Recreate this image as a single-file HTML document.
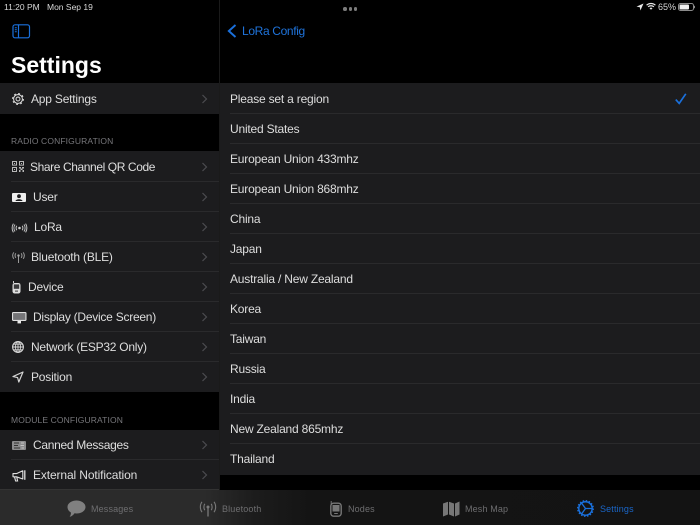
<!DOCTYPE html>
<html><head><meta charset="utf-8">
<style>
html,body{margin:0;padding:0;background:#000}
#p{position:relative;width:700px;height:525px;overflow:hidden;background:#000;font-family:"Liberation Sans",sans-serif;color:#e6e6e6}
#p *{box-sizing:border-box}
.a{position:absolute}
.t{position:absolute;white-space:nowrap;font-size:12px;line-height:16px;color:#dedede;letter-spacing:-.2px}
.row{position:absolute;background:#1c1c1e}
.sep{position:absolute;height:1px;background:#2a2a2c}
.h{position:absolute;white-space:nowrap;font-size:8.5px;line-height:12px;color:#77777b;letter-spacing:.13px}
svg{position:absolute;overflow:visible}
.tb{position:absolute;white-space:nowrap;font-size:9px;line-height:12px;color:#6e6e70;letter-spacing:.15px}
</style></head><body><div id="p">

<!-- sidebar groups -->
<div class="row" style="left:0;top:83px;width:219px;height:31px"></div>
<div class="row" style="left:0;top:151px;width:219px;height:241px"></div>
<div class="row" style="left:0;top:430px;width:219px;height:60px"></div>
<div class="a" style="left:219px;top:0;width:1px;height:490px;background:#1a1a1a"></div>

<!-- right list -->
<div class="row" style="left:220px;top:83px;width:480px;height:392px"></div>

<!-- status -->
<div class="t" style="left:4px;top:1px;font-size:8.5px;line-height:12px;color:#d8d8d8;letter-spacing:0">11:20 PM</div>
<div class="t" style="left:47px;top:1px;font-size:8.5px;line-height:12px;color:#d8d8d8;letter-spacing:0">Mon Sep 19</div>
<svg style="left:636px;top:3px" width="8" height="8" viewBox="0 0 8 8"><path d="M7.5 .5L.5 3.6 3.8 4.2 4.4 7.5Z" fill="#e8e8e8"/></svg>
<svg style="left:646px;top:2px" width="10" height="9" viewBox="0 0 10 9"><path d="M.6 3.2C3 .9 7 .9 9.4 3.2M2.1 4.8C3.7 3.4 6.3 3.4 7.9 4.8" fill="none" stroke="#e8e8e8" stroke-width="1.2"/><path d="M3.5 6.2C4.4 5.4 5.6 5.4 6.5 6.2L5 7.8Z" fill="#e8e8e8"/></svg>
<div class="t" style="left:658px;top:1px;font-size:9px;line-height:12px;color:#d8d8d8;letter-spacing:0">65%</div>
<svg style="left:678px;top:3px" width="18" height="8" viewBox="0 0 18 8"><rect x=".5" y=".5" width="15" height="7" rx="2" fill="none" stroke="#8a8a8a"/><rect x="1.5" y="1.5" width="9.5" height="5" rx="1" fill="#f0f0f0"/><rect x="16" y="2.8" width="1" height="2.4" fill="#8a8a8a"/></svg>
<div class="a" style="left:343px;top:7px;width:3.5px;height:3.5px;border-radius:50%;background:#7c7c7c"></div>
<div class="a" style="left:348.5px;top:7px;width:3.5px;height:3.5px;border-radius:50%;background:#7c7c7c"></div>
<div class="a" style="left:353.5px;top:7px;width:3.5px;height:3.5px;border-radius:50%;background:#7c7c7c"></div>

<!-- sidebar header -->
<svg style="left:12px;top:24px" width="19" height="15" viewBox="0 0 19 15" fill="none" stroke="#1a70dc" stroke-width="1.2"><rect x="1" y=".8" width="16.5" height="13" rx="2"/><path d="M6.5 .8V13.8"/><path d="M2.8 3.8H4.8M2.8 5.8H4.8M2.8 7.8H4.8" stroke-width="1"/></svg>
<div class="t" style="left:11px;top:51px;font-size:23px;line-height:28px;font-weight:700;color:#fff;letter-spacing:0">Settings</div>

<!-- back -->
<svg style="left:227px;top:24px" width="10" height="14" viewBox="0 0 10 14"><path d="M8.5 1L1.8 7 8.5 13" fill="none" stroke="#1a70dc" stroke-width="1.9"/></svg>
<div class="t" style="left:242px;top:23px;color:#1f74dc;letter-spacing:-.35px">LoRa Config</div>

<!-- sidebar rows -->
<div class="t" style="left:31px;top:91px">App Settings</div>
<div class="h" style="left:11px;top:135px">RADIO CONFIGURATION</div>
<div class="t" style="left:30px;top:159px;letter-spacing:-.4px">Share Channel QR Code</div>
<div class="t" style="left:33px;top:189px">User</div>
<div class="t" style="left:34px;top:219px">LoRa</div>
<div class="t" style="left:31px;top:249px">Bluetooth (BLE)</div>
<div class="t" style="left:28px;top:279px">Device</div>
<div class="t" style="left:33px;top:309px;letter-spacing:-.25px">Display (Device Screen)</div>
<div class="t" style="left:31px;top:339px;letter-spacing:-.25px">Network (ESP32 Only)</div>
<div class="t" style="left:31px;top:369px">Position</div>
<div class="h" style="left:11px;top:414px">MODULE CONFIGURATION</div>
<div class="t" style="left:33px;top:437px;letter-spacing:-.3px">Canned Messages</div>
<div class="t" style="left:33px;top:467px;letter-spacing:-.12px">External Notification</div>

<div class="sep" style="left:11px;top:181px;width:208px"></div>
<div class="sep" style="left:11px;top:211px;width:208px"></div>
<div class="sep" style="left:11px;top:241px;width:208px"></div>
<div class="sep" style="left:11px;top:271px;width:208px"></div>
<div class="sep" style="left:11px;top:301px;width:208px"></div>
<div class="sep" style="left:11px;top:331px;width:208px"></div>
<div class="sep" style="left:11px;top:361px;width:208px"></div>
<div class="sep" style="left:11px;top:459px;width:208px"></div>

<!-- chevrons -->
<svg style="left:201px;top:94px" width="7" height="10" viewBox="0 0 7 10"><path id="c" d="M1.5 1L5.5 5 1.5 9" fill="none" stroke="#4c4c50" stroke-width="1.2"/></svg>
<svg style="left:201px;top:162px" width="7" height="10"><use href="#c"/></svg>
<svg style="left:201px;top:192px" width="7" height="10"><use href="#c"/></svg>
<svg style="left:201px;top:222px" width="7" height="10"><use href="#c"/></svg>
<svg style="left:201px;top:252px" width="7" height="10"><use href="#c"/></svg>
<svg style="left:201px;top:282px" width="7" height="10"><use href="#c"/></svg>
<svg style="left:201px;top:312px" width="7" height="10"><use href="#c"/></svg>
<svg style="left:201px;top:342px" width="7" height="10"><use href="#c"/></svg>
<svg style="left:201px;top:372px" width="7" height="10"><use href="#c"/></svg>
<svg style="left:201px;top:440px" width="7" height="10"><use href="#c"/></svg>
<svg style="left:201px;top:470px" width="7" height="10"><use href="#c"/></svg>

<!-- sidebar icons -->
<svg style="left:12px;top:93px" width="12" height="12" viewBox="0 0 13 13" fill="none" stroke="#d8d8d8"><circle cx="6.5" cy="6.5" r="2.1" stroke-width="1.1"/><circle cx="6.5" cy="6.5" r="4.8" stroke-width="1.1"/><circle cx="6.5" cy="6.5" r="5.8" stroke-width="1.3" stroke-dasharray="2 2.55"/></svg>
<svg style="left:12px;top:161px" width="12" height="11" viewBox="0 0 12 11" fill="#b8b8b8"><path fill-rule="evenodd" d="M0 0H5V4.6H0ZM1 1V3.6H4V1ZM7 0H12V4.6H7ZM8 1V3.6H11V1ZM0 6H5V11H0ZM1 7V10H4V7Z"/><rect x="2" y="2" width="1" height="1"/><rect x="9" y="2" width="1" height="1"/><rect x="2" y="8" width="1" height="1"/><path d="M7 6H9V7.5H7ZM10 6H12V7.5H10ZM8.5 7.5H10.5V9H8.5ZM7 9H8.5V11H7ZM10.5 9H12V11H10.5Z"/></svg>
<svg style="left:12px;top:193px" width="14" height="9" viewBox="0 0 14 9"><rect width="14" height="9" rx="1" fill="#eee"/><circle cx="7" cy="3.2" r="1.9" fill="#1c1c1e"/><path d="M3.5 8C3.8 5.6 10.2 5.6 10.5 8Z" fill="#1c1c1e"/></svg>
<svg style="left:12px;top:223px" width="15" height="10" viewBox="0 0 15 10" fill="none" stroke="#c4c4c4" stroke-width="1"><circle cx="7.5" cy="5" r="1.3" fill="#d0d0d0" stroke="none"/><path d="M4.8 2.7C4 4 4 6 4.8 7.3M10.2 2.7C11 4 11 6 10.2 7.3M3 1.5C1.6 3.6 1.6 6.4 3 8.5M12 1.5C13.4 3.6 13.4 6.4 12 8.5M1.4.6C-.3 3.2 -.3 6.8 1.4 9.4M13.6.6C15.3 3.2 15.3 6.8 13.6 9.4"/></svg>
<svg style="left:12px;top:252px" width="13" height="11" viewBox="0 0 13 11" fill="none" stroke="#9a9a9a" stroke-width="1"><circle cx="6.5" cy="3.6" r="1.2" fill="#aaa" stroke="none"/><path d="M6.5 4.5V11M3.8 1.3C2.9 2.7 2.9 4.5 3.8 5.9M9.2 1.3C10.1 2.7 10.1 4.5 9.2 5.9M1.8.4C.4 2.4 .4 4.8 1.8 6.8M11.2.4C12.6 2.4 12.6 4.8 11.2 6.8"/></svg>
<svg style="left:12px;top:281px" width="9" height="13" viewBox="0 0 9 13"><path d="M1.5 0V2" stroke="#ccc" fill="none"/><rect x=".5" y="2" width="8" height="10.5" rx="2.2" fill="#ddd"/><rect x="1.8" y="3.4" width="5.4" height="4.4" fill="#3a3a3c"/><rect x="3" y="9.6" width="3" height="1" fill="#3a3a3c"/></svg>
<svg style="left:12px;top:312px" width="14.5" height="12" viewBox="0 0 14.5 12"><rect width="14.5" height="9" rx="1.2" fill="#dedede"/><rect x="1.1" y="1.1" width="12.3" height="6.8" fill="#747477"/><rect x="5.5" y="9" width="3.5" height="2.4" fill="#e8e8e8"/></svg>
<svg style="left:12px;top:341px" width="12" height="12" viewBox="0 0 12 12" fill="none" stroke="#d6d6d6" stroke-width=".9"><circle cx="6" cy="6" r="5.4" stroke-width="1.1"/><ellipse cx="6" cy="6" rx="2.5" ry="5.4"/><path d="M6 .5V11.5M.5 6H11.5M1.3 3.2H10.7M1.3 8.8H10.7"/></svg>
<svg style="left:12px;top:371px" width="12" height="12" viewBox="0 0 12 12"><path d="M11 1L1 5.6 5.6 6.6 6.8 11Z" fill="none" stroke="#d4d4d4" stroke-width="1.2" stroke-linejoin="round"/></svg>
<svg style="left:12px;top:441px" width="14" height="9" viewBox="0 0 14 9"><rect width="14" height="9" rx="1" fill="#8c8c8e"/><path d="M2 2H7M2 4.5H6M2 7H8" stroke="#333"/><path d="M9 2H12M8.5 4.5H12M9.5 7H12" stroke="#c4c4c4"/></svg>
<svg style="left:12px;top:470px" width="14" height="12" viewBox="0 0 14 12" fill="none" stroke="#e0e0e0" stroke-width="1.1"><path d="M1 3.6H4.5L10.8 .8V9L4.5 6.8H1Z" stroke-linejoin="round"/><path d="M12.8 .3V9.8" stroke-width="1.3"/><path d="M2.5 6.8L3.6 11H5.6L4.8 7"/></svg>

<!-- right rows -->
<div class="t" style="left:230px;top:91px">Please set a region</div>
<div class="t" style="left:230px;top:121px">United States</div>
<div class="t" style="left:230px;top:151px">European Union 433mhz</div>
<div class="t" style="left:230px;top:181px">European Union 868mhz</div>
<div class="t" style="left:230px;top:211px">China</div>
<div class="t" style="left:230px;top:241px">Japan</div>
<div class="t" style="left:230px;top:271px">Australia / New Zealand</div>
<div class="t" style="left:230px;top:301px">Korea</div>
<div class="t" style="left:230px;top:331px">Taiwan</div>
<div class="t" style="left:230px;top:361px">Russia</div>
<div class="t" style="left:230px;top:391px">India</div>
<div class="t" style="left:230px;top:421px">New Zealand 865mhz</div>
<div class="t" style="left:230px;top:451px">Thailand</div>
<div class="sep" style="left:230px;top:113px;width:470px"></div>
<div class="sep" style="left:230px;top:143px;width:470px"></div>
<div class="sep" style="left:230px;top:173px;width:470px"></div>
<div class="sep" style="left:230px;top:203px;width:470px"></div>
<div class="sep" style="left:230px;top:233px;width:470px"></div>
<div class="sep" style="left:230px;top:263px;width:470px"></div>
<div class="sep" style="left:230px;top:293px;width:470px"></div>
<div class="sep" style="left:230px;top:323px;width:470px"></div>
<div class="sep" style="left:230px;top:353px;width:470px"></div>
<div class="sep" style="left:230px;top:383px;width:470px"></div>
<div class="sep" style="left:230px;top:413px;width:470px"></div>
<div class="sep" style="left:230px;top:443px;width:470px"></div>
<svg style="left:675px;top:93px" width="12" height="12" viewBox="0 0 12 12"><path d="M.8 6.6L4.2 10.4 10.8 .8" fill="none" stroke="#1a70dc" stroke-width="1.7"/></svg>

<!-- tab bar -->
<div class="a" style="left:0;top:490px;width:700px;height:35px;background:linear-gradient(90deg,#2b2b2b 0,#2b2b2b 205px,#1c1c1c 255px,#141414 310px,#131313 700px)"></div>
<div class="a" style="left:0;top:489px;width:219px;height:1px;background:#333"></div>
<svg style="left:67px;top:500px" width="19" height="18" viewBox="0 0 19 18"><path d="M9.5 .5C14.5 .5 18.5 3.3 18.5 7S14.5 13.5 9.5 13.5C8.8 13.5 8.1 13.4 7.5 13.3 6.5 15 4.5 16.5 2.6 16.8 3.6 15.5 4 14 3.9 12.5 1.8 11.3.5 9.3.5 7 .5 3.3 4.5 .5 9.5 .5Z" fill="#808080"/></svg>
<div class="tb" style="left:91px;top:503px">Messages</div>
<svg style="left:199px;top:501px" width="18" height="16" viewBox="0 0 18 16" fill="none" stroke="#7a7a7a" stroke-width="1.1"><circle cx="9" cy="6" r="1.5" fill="#7a7a7a" stroke="none"/><path d="M9 7V15.5" stroke-width="1.3"/><path d="M5.8 2.8C4.6 4.6 4.6 7.4 5.8 9.2M12.2 2.8C13.4 4.6 13.4 7.4 12.2 9.2M3 .8C.8 3.8 .8 8.2 3 11.2M15 .8C17.2 3.8 17.2 8.2 15 11.2"/></svg>
<div class="tb" style="left:222px;top:503px">Bluetooth</div>
<svg style="left:330px;top:501px" width="12" height="16" viewBox="0 0 12 16"><path d="M1.2 0V3" stroke="#777" fill="none"/><rect x=".8" y="2.2" width="10.4" height="13" rx="2.8" fill="none" stroke="#777" stroke-width="1.4"/><rect x="2.5" y="4" width="7" height="6.5" fill="#777"/><rect x="4.2" y="12" width="3.6" height="1" fill="#777"/></svg>
<div class="tb" style="left:348px;top:503px">Nodes</div>
<svg style="left:443px;top:501px" width="17" height="16" viewBox="0 0 17 16"><path d="M0 2.5L5 .8V13.5L0 15.5ZM6 .8L11 2.5V15.5L6 13.5ZM12 2.5L16.5 .5V13.5L12 15.5Z" fill="#777"/></svg>
<div class="tb" style="left:465px;top:503px">Mesh Map</div>
<svg style="left:577px;top:500px" width="17" height="17" viewBox="0 0 17 17" fill="none" stroke="#1a70dc"><circle cx="8.5" cy="8.5" r="6.7" stroke-width="1.5"/><circle cx="8.5" cy="8.5" r="7.8" stroke-width="1.3" stroke-dasharray="1.5 1.56"/><path d="M4.5 3L8.5 8.5H15M4.5 14L8.5 8.5" stroke-width="1.3"/></svg>
<div class="tb" style="left:600px;top:503px;color:#1a66c8">Settings</div>

</div></body></html>
